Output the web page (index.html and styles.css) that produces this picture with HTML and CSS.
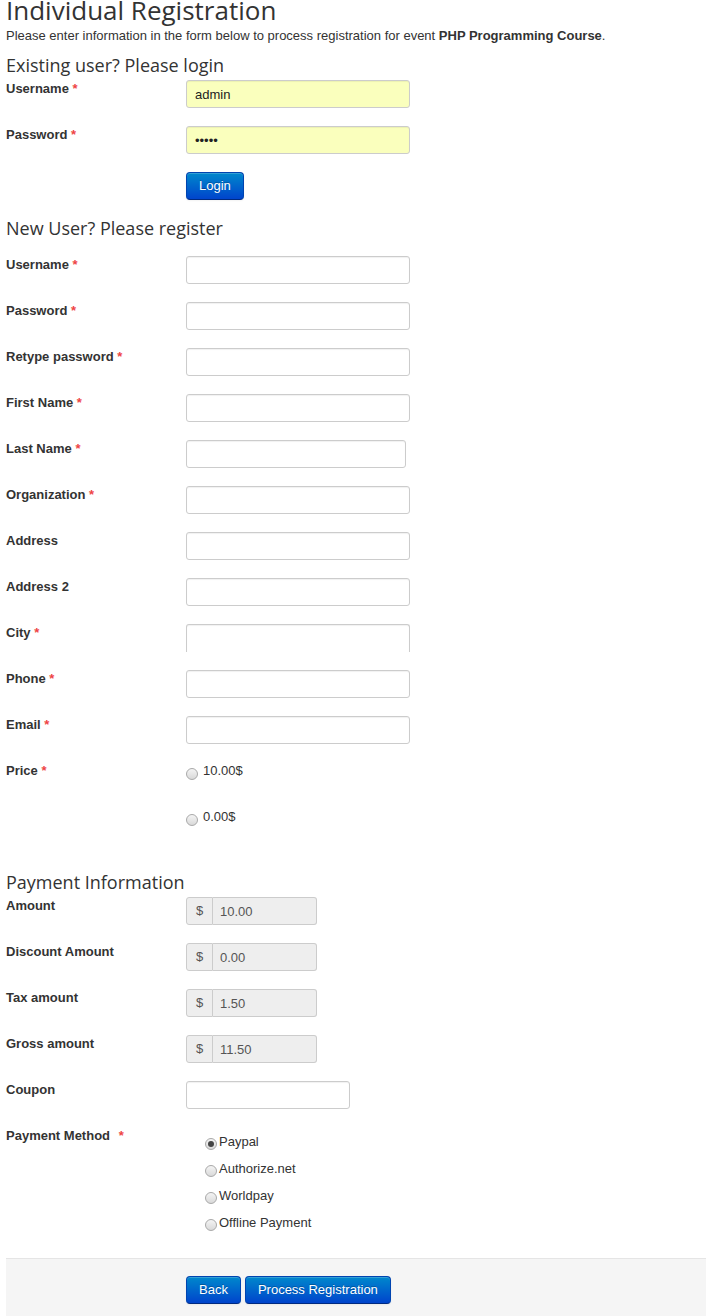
FILE: index.html
```html
<!DOCTYPE html>
<html>
<head>
<meta charset="utf-8">
<title>Individual Registration</title>
<link rel="stylesheet" href="styles.css">
</head>
<body>
<div class="page">
  <h1 class="title">Individual Registration</h1>
  <p class="intro">Please enter information in the form below to process registration for event <strong>PHP Programming Course</strong>.</p>

  <h2 class="section section-login">Existing user? Please login</h2>
  <div class="row">
    <label class="lbl">Username <span class="req">*</span></label>
    <input class="field autofill" type="text" value="admin">
  </div>
  <div class="row">
    <label class="lbl">Password <span class="req">*</span></label>
    <input class="field autofill" type="password" value="admin">
  </div>
  <div class="row">
    <span class="lbl"></span>
    <button class="btn">Login</button>
  </div>

  <h2 class="section section-register">New User? Please register</h2>
  <div class="row">
    <label class="lbl">Username <span class="req">*</span></label>
    <input class="field" type="text">
  </div>
  <div class="row">
    <label class="lbl">Password <span class="req">*</span></label>
    <input class="field" type="password">
  </div>
  <div class="row">
    <label class="lbl">Retype password <span class="req">*</span></label>
    <input class="field" type="password">
  </div>
  <div class="row">
    <label class="lbl">First Name <span class="req">*</span></label>
    <input class="field" type="text">
  </div>
  <div class="row">
    <label class="lbl">Last Name <span class="req">*</span></label>
    <input class="field field-narrow" type="text">
  </div>
  <div class="row">
    <label class="lbl">Organization <span class="req">*</span></label>
    <input class="field" type="text">
  </div>
  <div class="row">
    <label class="lbl">Address</label>
    <input class="field" type="text">
  </div>
  <div class="row">
    <label class="lbl">Address 2</label>
    <input class="field" type="text">
  </div>
  <div class="row">
    <label class="lbl">City <span class="req">*</span></label>
    <input class="field field-open" type="text">
  </div>
  <div class="row">
    <label class="lbl">Phone <span class="req">*</span></label>
    <input class="field" type="text">
  </div>
  <div class="row">
    <label class="lbl">Email <span class="req">*</span></label>
    <input class="field" type="text">
  </div>
  <div class="row">
    <label class="lbl">Price <span class="req">*</span></label>
    <div class="price-list">
      <label class="price-opt"><input class="radio" type="radio" name="price"> 10.00$</label>
      <label class="price-opt"><input class="radio" type="radio" name="price"> 0.00$</label>
    </div>
  </div>

  <h2 class="section section-payment">Payment Information</h2>
  <div class="row">
    <label class="lbl">Amount</label>
    <div class="addon-group"><span class="addon">$</span><input class="addon-field" type="text" value="10.00" readonly></div>
  </div>
  <div class="row">
    <label class="lbl">Discount Amount</label>
    <div class="addon-group"><span class="addon">$</span><input class="addon-field" type="text" value="0.00" readonly></div>
  </div>
  <div class="row">
    <label class="lbl">Tax amount</label>
    <div class="addon-group"><span class="addon">$</span><input class="addon-field" type="text" value="1.50" readonly></div>
  </div>
  <div class="row">
    <label class="lbl">Gross amount</label>
    <div class="addon-group"><span class="addon">$</span><input class="addon-field" type="text" value="11.50" readonly></div>
  </div>
  <div class="row">
    <label class="lbl">Coupon</label>
    <input class="field field-coupon" type="text">
  </div>
  <div class="row row-method">
    <label class="lbl">Payment Method <span class="req req-wide">*</span></label>
    <div class="method-list">
      <label class="method-opt"><input class="radio" type="radio" name="method" checked>Paypal</label>
      <label class="method-opt"><input class="radio" type="radio" name="method">Authorize.net</label>
      <label class="method-opt"><input class="radio" type="radio" name="method">Worldpay</label>
      <label class="method-opt"><input class="radio" type="radio" name="method">Offline Payment</label>
    </div>
  </div>

  <div class="actions">
    <button class="btn">Back</button>
    <button class="btn">Process Registration</button>
  </div>
</div>
</body>
</html>
```

FILE: styles.css
```css
html, body {
  margin: 0;
  padding: 0;
  background: #fff;
}

body {
  font-family: Arial, "Liberation Sans", sans-serif;
  font-size: 13px;
  line-height: 18px;
  color: #333;
  overflow: hidden;
}

.page {
  width: 700px;
  margin-left: 6px;
}

.title {
  font-family: "Open Sans", sans-serif;
  font-weight: 400;
  font-size: 26px;
  line-height: 30px;
  color: #333;
  margin: -5px 0 0 0;
  white-space: nowrap;
}

.intro {
  margin: 2px 0 0 0;
  font-size: 13px;
  line-height: 18px;
  color: #333;
}

.intro strong {
  font-weight: bold;
}

.section {
  font-family: "Open Sans", sans-serif;
  font-weight: 400;
  font-size: 18px;
  line-height: 24px;
  color: #333;
  margin: 0;
}

.section-login {
  margin-top: 8px;
  margin-bottom: 3px;
}

.section-register {
  margin-top: -2px;
  margin-bottom: 16px;
}

.section-payment {
  margin-top: 44px;
  margin-bottom: 3px;
}

.row {
  display: flex;
  align-items: flex-start;
  margin-bottom: 18px;
}

.lbl {
  display: block;
  flex: 0 0 180px;
  width: 180px;
  font-weight: bold;
  font-size: 13px;
  line-height: 18px;
  color: #333;
}

.req {
  color: #ee4444;
  font-weight: bold;
}

.req-wide {
  margin-left: 5px;
}

.field {
  box-sizing: border-box;
  width: 224px;
  height: 28px;
  margin: 0;
  padding: 4px 8px;
  border: 1px solid #ccc;
  border-radius: 3px;
  background: #fff;
  font-family: Arial, "Liberation Sans", sans-serif;
  font-size: 13px;
  color: #333;
  box-shadow: inset 0 1px 1px rgba(0, 0, 0, 0.06);
  outline: none;
}

.autofill {
  background: #faffbd;
  color: #222;
}

.field-narrow {
  width: 220px;
}

.field-open {
  border-bottom: 0;
  border-bottom-left-radius: 0;
  border-bottom-right-radius: 0;
}

.field-coupon {
  width: 164px;
}

.btn {
  box-sizing: border-box;
  height: 28px;
  margin: 0;
  padding: 0 12px;
  font-family: Arial, "Liberation Sans", sans-serif;
  font-size: 13px;
  line-height: 26px;
  color: #fff;
  text-shadow: 0 -1px 0 rgba(0, 0, 0, 0.25);
  background: linear-gradient(to bottom, #0088cc, #0044cc);
  border: 1px solid #0044b0;
  border-bottom-color: #002a80;
  border-radius: 4px;
  box-shadow: inset 0 1px 0 rgba(255, 255, 255, 0.2), 0 1px 2px rgba(0, 0, 0, 0.05);
  cursor: pointer;
}

.price-list {
  display: flex;
  flex-direction: column;
  gap: 28px;
}

.price-opt {
  display: flex;
  align-items: center;
  height: 18px;
  font-size: 13px;
  color: #333;
}

.price-opt .radio {
  margin: 5px 5px 0 0;
}

.radio {
  -webkit-appearance: none;
  appearance: none;
  box-sizing: border-box;
  width: 12px;
  height: 12px;
  margin: 0;
  border: 1px solid #a9a9a9;
  border-radius: 50%;
  background: linear-gradient(to bottom, #f4f4f4, #d9d9d9);
  flex: 0 0 12px;
  position: relative;
}

.radio:checked::after {
  content: "";
  position: absolute;
  left: 2px;
  top: 2px;
  width: 6px;
  height: 6px;
  border-radius: 50%;
  background: #444;
}

.addon-group {
  display: flex;
  width: 131px;
  height: 28px;
}

.addon {
  box-sizing: border-box;
  width: 27px;
  height: 28px;
  border: 1px solid #ccc;
  border-radius: 3px 0 0 3px;
  background: #eee;
  color: #555;
  text-align: center;
  line-height: 26px;
  font-size: 13px;
}

.addon-field {
  box-sizing: border-box;
  width: 104px;
  height: 28px;
  margin: 0;
  padding: 4px 7px;
  border: 1px solid #ccc;
  border-left: 0;
  border-radius: 0 3px 3px 0;
  background: #eee;
  color: #555;
  font-family: Arial, "Liberation Sans", sans-serif;
  font-size: 13px;
  outline: none;
}

.method-list {
  display: flex;
  flex-direction: column;
  margin-left: 19px;
  margin-top: 1px;
}

.method-opt {
  display: flex;
  align-items: center;
  height: 27px;
  font-size: 13px;
  color: #333;
}

.method-opt .radio {
  margin: 4px 2px 0 0;
}

.row-method {
  margin-bottom: 22px;
}

.actions {
  display: flex;
  gap: 4px;
  padding: 17px 0 20px 180px;
  background: #f5f5f5;
  border-top: 1px solid #e5e5e5;
}
```
